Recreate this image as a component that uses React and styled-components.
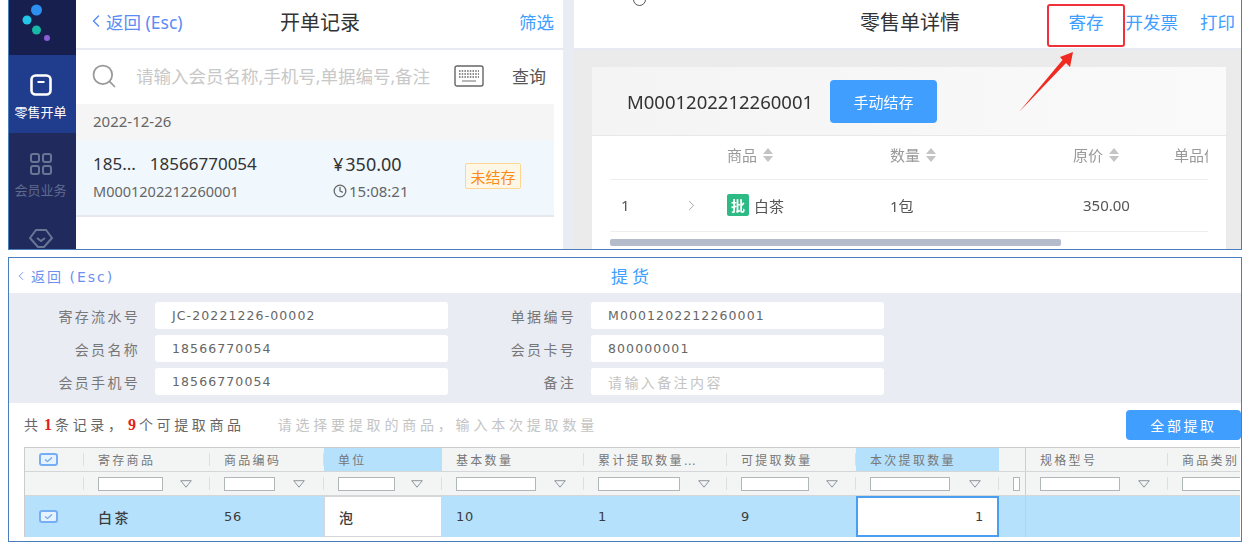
import React from 'react'
import styled, { createGlobalStyle } from 'styled-components'
import { ChevronLeft, ChevronRight, Clock, Search } from 'lucide-react'

const sans = '"Noto Sans", "Noto Sans CJK SC", sans-serif'
const wide = '"DejaVu Sans", "Noto Sans CJK SC", sans-serif'
const columns = '60px 126px 114px 118px 142px 143px 129px 143px 27px 142px 72px'

const GlobalStyle = createGlobalStyle`
  html, body {
    margin: 0;
    padding: 0;
    background: #fff;
  }
  body {
    font-family: ${sans};
  }
`

const Page = styled.div`
  width: 1250px;
  height: 545px;
  padding: 0 8px;
  box-sizing: border-box;
  display: flex;
  flex-direction: column;
  gap: 7px;
  overflow: hidden;
  filter: blur(0.35px);
`

const TopShot = styled.section`
  height: 250px;
  flex: none;
  display: flex;
  box-sizing: border-box;
  border: 1px solid #4a7ebb;
  border-top: none;
  overflow: hidden;
`

const Sidebar = styled.nav`
  width: 67px;
  flex: none;
  background: #202a5c;
  display: flex;
  flex-direction: column;
`

const LogoBox = styled.div`
  height: 55px;
  flex: none;
  background: #171f4e;
`

const NavItem = styled.div`
  height: ${p => (p.$active ? '78px' : '76px')};
  flex: none;
  display: flex;
  flex-direction: column;
  align-items: center;
  padding: ${p => (p.$active ? '19px' : '20px')} 4px 0 0;
  box-sizing: border-box;
  gap: ${p => (p.$active ? '8px' : '7px')};
  background: ${p => (p.$active ? '#1f3d8c' : 'transparent')};
  color: ${p => (p.$active ? '#fff' : '#5f6a8e')};
  font-size: 13px;
  line-height: 16px;
  white-space: nowrap;
`

const ListPanel = styled.div`
  width: 487px;
  flex: none;
  box-sizing: border-box;
  padding-right: 9px;
  background: #fff;
`

const ListHeader = styled.header`
  height: 50px;
  display: grid;
  grid-template-columns: 188px auto 1fr;
  align-items: center;
  box-sizing: border-box;
  margin-right: -9px;
  padding: 0 9px 6px 16px;
  border-bottom: 2px solid #e8eaf2;
`

const BackLink = styled.a`
  display: flex;
  align-items: center;
  margin-left: -6px;
  font-size: 17.5px;
  color: #5b8cf5;
  white-space: nowrap;
`

const PageTitle = styled.h1`
  margin: 0;
  font-size: 20px;
  font-weight: 400;
  color: #333;
  white-space: nowrap;
`

const ActionLink = styled.a`
  font-size: 17.5px;
  color: #409eff;
  white-space: nowrap;
  justify-self: end;
`

const SearchRow = styled.div`
  height: 54px;
  display: flex;
  align-items: center;
  box-sizing: border-box;
  padding: 0 0 3px 14px;
  color: #999;
`

const SearchHint = styled.span`
  margin-left: 18px;
  width: 318px;
  font-size: 17.5px;
  color: #c8c8c8;
  white-space: nowrap;
`

const QueryLabel = styled.span`
  margin-left: 28px;
  font-size: 17px;
  color: #555;
`

const DateBar = styled.div`
  height: 36px;
  display: flex;
  align-items: center;
  box-sizing: border-box;
  padding: 0 0 3px 17px;
  background: #f5f5f5;
  color: #666;
  font-size: 15px;
`

const OrderRow = styled.div`
  height: 77px;
  display: grid;
  grid-template-columns: 240px 132px 56px;
  align-items: center;
  box-sizing: border-box;
  padding: 0 0 3px 17px;
  background: #f0f8fe;
  border-bottom: 2px solid #e6e8ee;
`

const OrderCell = styled.div`
  display: flex;
  flex-direction: column;
  gap: 4px;
`

const OrderMain = styled.div`
  display: flex;
  gap: ${p => p.$gap || 0}px;
  font-size: ${p => p.$size || 17}px;
  line-height: 26px;
  color: #333;
  white-space: nowrap;
`

const OrderSub = styled.div`
  display: flex;
  align-items: center;
  gap: 2px;
  font-size: ${p => p.$size || 14.5}px;
  line-height: 20px;
  color: #666;
  white-space: nowrap;
`

const StatusTag = styled.span`
  height: 26px;
  display: flex;
  align-items: center;
  justify-content: center;
  box-sizing: border-box;
  background: #fff7e6;
  border: 1px solid #ffd591;
  border-radius: 2px;
  color: #fa8c16;
  font-size: 15px;
  white-space: nowrap;
`

const Divider = styled.div`
  width: 11px;
  flex: none;
  background: #e9ecf3;
`

const DetailPanel = styled.div`
  flex: 1;
  min-width: 0;
  position: relative;
  display: flex;
  flex-direction: column;
  background: #ebebeb;
`

const DetailHeader = styled.header`
  height: 50px;
  flex: none;
  display: flex;
  align-items: center;
  box-sizing: border-box;
  padding: 0 6px 6px 286px;
  background: #fff;
  border-bottom: 2px solid #e8eaf2;
`

const DetailActions = styled.div`
  margin-left: auto;
  display: flex;
  gap: 22px;
`

const DetailBody = styled.div`
  flex: 1;
  min-height: 0;
  padding: 17px 15px 0 18px;
`

const Card = styled.div`
  height: 100%;
  background: #fff;
`

const CardHead = styled.div`
  height: 68px;
  display: flex;
  align-items: center;
  gap: 17px;
  padding-left: 35px;
  background: linear-gradient(90deg, #f4f4f4, #fafafa);
  border-bottom: 1px solid #e8e8e8;
  font-size: 18.5px;
  color: #333;
`

const SettleButton = styled.button`
  width: 107px;
  height: 43px;
  border: none;
  border-radius: 4px;
  background: #409eff;
  color: #fff;
  font-family: ${sans};
  font-size: 15px;
`

const GoodsTable = styled.div`
  width: 598px;
  margin-left: 18px;
  overflow: hidden;
`

const GoodsRow = styled.div`
  display: grid;
  grid-template-columns: 117px 163px 183px 101px 34px;
  height: ${p => (p.$head ? '44px' : '52px')};
  align-items: center;
  box-sizing: border-box;
  padding-bottom: ${p => (p.$head ? '6px' : '1px')};
  border-bottom: 1px solid #eceef2;
  font-size: 15px;
  color: ${p => (p.$head ? '#999' : '#555')};
  white-space: nowrap;
`

const SortLabel = styled.span`
  display: flex;
  align-items: center;
  gap: 6px;
  overflow: hidden;
`

const IndexCell = styled.span`
  display: flex;
  align-items: center;
  padding-left: 11px;
  gap: 53px;
`

const GoodsName = styled.span`
  display: flex;
  align-items: center;
  gap: 5px;
`

const BatchBadge = styled.span`
  width: 22px;
  height: 22px;
  display: flex;
  align-items: center;
  justify-content: center;
  background: #2dba85;
  border-radius: 2px;
  color: #fff;
  font-weight: 700;
  font-size: 14px;
`

const Price = styled.span`
  padding-left: 10px;
`

const ScrollBar = styled.div`
  width: 451px;
  height: 7px;
  margin: 7px 0 0 18px;
  border-radius: 2px;
  background: #b4bccb;
`

const Callout = styled.div`
  position: absolute;
  left: 473px;
  top: 4px;
  width: 78px;
  height: 43px;
  box-sizing: border-box;
  border: 2px solid #f0303a;
  border-radius: 3px;
`

const CalloutArrow = styled.svg`
  position: absolute;
  left: 440px;
  top: 46px;
`

const CursorRing = styled.div`
  position: absolute;
  left: 59px;
  top: -7px;
  width: 11px;
  height: 11px;
  border: 1px solid #555;
  border-radius: 50%;
`

const PickupShot = styled.section`
  height: 285px;
  flex: none;
  box-sizing: border-box;
  border: 1px solid #4a7ebb;
  background: #fff;
  font-family: ${wide};
  overflow: hidden;
`

const PickupHeader = styled.header`
  height: 35px;
  display: grid;
  grid-template-columns: 597px auto;
  align-items: center;
  padding-left: 5px;
`

const PickupBack = styled.a`
  display: flex;
  align-items: center;
  gap: 3px;
  font-size: 14px;
  letter-spacing: 2px;
  color: #6b90ef;
  white-space: nowrap;
`

const PickupTitle = styled.h2`
  margin: 0;
  font-size: 17px;
  font-weight: 400;
  letter-spacing: 4px;
  color: #409eff;
`

const FormArea = styled.div`
  display: grid;
  grid-template-columns: 131px 293px 113px 293px;
  grid-auto-rows: 27px;
  column-gap: 15px;
  row-gap: 6px;
  padding: 9px 0 8px;
  background: #e9ecf3;
`

const FieldLabel = styled.label`
  align-self: center;
  text-align: right;
  font-size: 14px;
  letter-spacing: 2.3px;
  color: #777;
  white-space: nowrap;
`

const FieldValue = styled.div`
  display: flex;
  align-items: center;
  padding-left: 17px;
  background: #fff;
  border-radius: 3px;
  font-size: ${p => (p.$hint ? '14px' : '12.5px')};
  letter-spacing: ${p => (p.$hint ? '2.4px' : '1.1px')};
  color: ${p => (p.$hint ? '#c4c4c4' : '#666')};
  white-space: nowrap;
`

const Toolbar = styled.div`
  height: 44px;
  display: flex;
  justify-content: space-between;
  align-items: flex-start;
  padding-left: 15px;
`

const ToolbarInfo = styled.div`
  display: flex;
  gap: 33px;
  line-height: 44px;
  font-size: 14px;
  letter-spacing: 3.6px;
  color: #666;
  white-space: nowrap;
`

const Count = styled.b`
  padding: 0 2.5px;
  color: #e02020;
  font-family: "Liberation Serif", serif;
  font-size: 16px;
  letter-spacing: 0.5px;
`

const ToolbarHint = styled.span`
  letter-spacing: 3.8px;
  color: #c4c4c4;
`

const PickAllButton = styled.button`
  width: 115px;
  height: 30px;
  margin-top: 7px;
  border: none;
  border-radius: 4px;
  background: #409eff;
  color: #fff;
  font-family: ${wide};
  font-size: 14px;
  letter-spacing: 2.6px;
`

const GridTable = styled.div`
  width: 1216px;
  margin-left: 15px;
  box-sizing: border-box;
  border-top: 1px solid #ccc;
  border-left: 1px solid #ccc;
  overflow: hidden;
`

const GridRow = styled.div`
  display: grid;
  grid-template-columns: ${columns};
  height: ${p => p.$height}px;
  margin-left: -1px;
  box-sizing: border-box;
  background: ${p => p.$bg};
  border-bottom: ${p => (p.$line ? '1px solid #d4d6d8' : 'none')};
`

const HeadCell = styled.div`
  position: relative;
  display: flex;
  align-items: center;
  padding-left: ${p => (p.$check ? '15px' : '14px')};
  min-width: 0;
  overflow: hidden;
  background: ${p => (p.$focus ? '#b5e1fd' : 'transparent')};
  border-right: ${p => (p.$frozen ? '1px solid #ccc' : 'none')};
  font-size: 12px;
  letter-spacing: 2.3px;
  color: #777;
  white-space: nowrap;
  &::after {
    content: '';
    display: ${p => (p.$sep ? 'block' : 'none')};
    position: absolute;
    right: 0;
    top: 5px;
    bottom: 5px;
    width: 1px;
    background: #dcdedf;
  }
`

const FilterInput = styled.span`
  width: ${p => p.$width}px;
  height: 14px;
  flex: none;
  box-sizing: border-box;
  background: #fff;
  border: 1px solid #b0b7b8;
`

const FunnelIcon = styled.svg`
  flex: none;
  margin-left: ${p => p.$gap}px;
`

const DataCell = styled.div`
  display: flex;
  align-items: center;
  justify-content: ${p => (p.$right ? 'flex-end' : 'flex-start')};
  padding: 0 ${p => (p.$right ? '13px' : '0')} 0 ${p => (p.$check ? '15px' : '14px')};
  box-sizing: border-box;
  background: ${p => (p.$white ? '#fff' : 'transparent')};
  border: ${p => p.$border || 'none'};
  border-right: ${p => (p.$frozen ? '1px solid #ccc' : p.$border || 'none')};
  font-size: ${p => (p.$han ? '14px' : '13px')};
  font-weight: 500;
  letter-spacing: ${p => (p.$han ? '2.5px' : '0.8px')};
  color: #3c3c3c;
`

const CheckBox = styled.span`
  width: 19px;
  height: 13px;
  box-sizing: border-box;
  display: flex;
  align-items: center;
  justify-content: center;
  background: #e6f3ff;
  border: 2px solid #76aef5;
  border-radius: 3px;
`

const Logo = () => (
  <svg width="67" height="55" viewBox="0 0 67 55">
    <circle cx="27.5" cy="10" r="5.5" fill="#2d8ff0" />
    <circle cx="18" cy="20" r="4.5" fill="#22c6e8" />
    <circle cx="27.5" cy="30" r="4.5" fill="#16b8a8" />
    <circle cx="38" cy="38" r="3" fill="#8a5fd6" />
  </svg>
)

const RetailIcon = () => (
  <svg width="22" height="22" viewBox="0 0 22 22" fill="none" stroke="#fff">
    <rect x="1.5" y="1.5" width="19" height="19" rx="4" strokeWidth="2.6" />
    <path d="M7.5 8h7" strokeWidth="2" />
  </svg>
)

const MemberIcon = () => (
  <svg width="22" height="22" viewBox="0 0 22 22" fill="none" stroke="#6a7596" strokeWidth="2">
    <rect x="1" y="1" width="8" height="8" rx="2" />
    <rect x="13" y="1" width="8" height="8" rx="2" />
    <rect x="1" y="13" width="8" height="8" rx="2" />
    <rect x="13" y="13" width="8" height="8" rx="2" />
  </svg>
)

const TagIcon = () => (
  <svg width="24" height="20" viewBox="0 0 24 20" fill="none" stroke="#6a7596" strokeWidth="2">
    <path d="M7 1h10l6 8-8 9H9L1 9z" />
    <path d="M8 9l4 3 4-3" />
  </svg>
)

const KeyboardIcon = () => (
  <svg width="30" height="22" viewBox="0 0 30 22" fill="none">
    <rect x="1" y="1" width="28" height="20" rx="2" stroke="#666" strokeWidth="1.4" />
    <path d="M5 6h20M5 9h20M5 12h20" stroke="#666" strokeWidth="1.6" strokeDasharray="1.5 1.2" />
    <path d="M8 16h14" stroke="#888" strokeWidth="1.2" />
  </svg>
)

const SortIcon = () => (
  <svg width="10" height="14" viewBox="0 0 10 14" fill="#c4c4c4">
    <path d="M5 0l5 6H0zM5 14L0 8h10z" />
  </svg>
)

const Funnel = ({ gap }) => (
  <FunnelIcon $gap={gap} width="12" height="8" viewBox="0 0 12 8" fill="none" stroke="#8d9498">
    <path d="M.7.7h10.6L6 7.2z" />
  </FunnelIcon>
)

const Tick = () => (
  <CheckBox>
    <svg width="11" height="7" viewBox="0 0 11 7" fill="none" stroke="#6aa6f0" strokeWidth="1.2">
      <path d="M2 3.5l2.5 2 4.5-4" />
    </svg>
  </CheckBox>
)

const fields = [
  ['寄存流水号', 'JC-20221226-00002', '单据编号', 'M0001202212260001'],
  ['会员名称', '18566770054', '会员卡号', '800000001'],
  ['会员手机号', '18566770054', '备注', '请输入备注内容', true],
]

const gridColumns = [
  { title: '', check: true, sep: true },
  { title: '寄存商品', input: 65, gap: 17, sep: true, value: '白茶', han: true },
  { title: '商品编码', input: 51, gap: 18, sep: true, value: '56' },
  { title: '单位', input: 57, gap: 16, focus: true, value: '泡', white: true, han: true },
  { title: '基本数量', input: 80, gap: 18, sep: true, value: '10' },
  { title: '累计提取数量…', input: 82, gap: 18, sep: true, value: '1' },
  { title: '可提取数量', input: 68, gap: 17, sep: true, value: '9' },
  { title: '本次提取数量', input: 80, gap: 19, focus: true, value: '1', editing: true },
  { title: '', mini: true, frozen: true },
  { title: '规格型号', input: 80, gap: 18, sep: true },
  { title: '商品类别', input: 70, gap: 0 },
]

const RetailDetail = () => (
  <DetailPanel>
    <DetailHeader>
      <PageTitle>零售单详情</PageTitle>
      <DetailActions>
        <ActionLink>寄存</ActionLink>
        <ActionLink>开发票</ActionLink>
        <ActionLink>打印</ActionLink>
      </DetailActions>
    </DetailHeader>
    <DetailBody>
      <Card>
        <CardHead>
          M0001202212260001
          <SettleButton>手动结存</SettleButton>
        </CardHead>
        <GoodsTable>
          <GoodsRow $head>
            <span />
            <SortLabel>商品<SortIcon /></SortLabel>
            <SortLabel>数量<SortIcon /></SortLabel>
            <SortLabel>原价<SortIcon /></SortLabel>
            <SortLabel>单品优惠</SortLabel>
          </GoodsRow>
          <GoodsRow>
            <IndexCell>1<ChevronRight size={17} strokeWidth={1.2} color="#999" /></IndexCell>
            <GoodsName><BatchBadge>批</BatchBadge>白茶</GoodsName>
            <span>1包</span>
            <Price>350.00</Price>
          </GoodsRow>
        </GoodsTable>
        <ScrollBar />
      </Card>
    </DetailBody>
    <CursorRing />
    <Callout />
    <CalloutArrow width="60" height="70" viewBox="0 0 60 70">
      <path d="M59 6 L56 21 L52 17 L5 66 L48.5 14 L46 11 Z" fill="#f02a20" />
    </CalloutArrow>
  </DetailPanel>
)

const Pickup = () => (
  <PickupShot>
    <PickupHeader>
      <PickupBack><ChevronLeft size={14} strokeWidth={1.6} />返回 (Esc)</PickupBack>
      <PickupTitle>提货</PickupTitle>
    </PickupHeader>
    <FormArea>
      {fields.map(([label, value, label2, value2, hint]) => (
        <React.Fragment key={label}>
          <FieldLabel>{label}</FieldLabel>
          <FieldValue>{value}</FieldValue>
          <FieldLabel>{label2}</FieldLabel>
          <FieldValue $hint={hint}>{value2}</FieldValue>
        </React.Fragment>
      ))}
    </FormArea>
    <Toolbar>
      <ToolbarInfo>
        <span>共<Count>1</Count>条记录，<Count>9</Count>个可提取商品</span>
        <ToolbarHint>请选择要提取的商品，输入本次提取数量</ToolbarHint>
      </ToolbarInfo>
      <PickAllButton>全部提取</PickAllButton>
    </Toolbar>
    <GridTable>
      <GridRow $height={24} $bg="#f3f5f5" $line>
        {gridColumns.map((col, i) => (
          <HeadCell key={i} $check={col.check} $sep={col.sep} $focus={col.focus} $frozen={col.frozen}>
            {col.check ? <Tick /> : col.title}
          </HeadCell>
        ))}
      </GridRow>
      <GridRow $height={24} $bg="#f3f5f5" $line>
        {gridColumns.map((col, i) => (
          <HeadCell key={i} $sep={col.sep || col.focus} $frozen={col.frozen}>
            {col.input && <FilterInput $width={col.input} />}
            {col.input && col.gap > 0 && <Funnel gap={col.gap} />}
            {col.mini && <FilterInput $width={7} />}
          </HeadCell>
        ))}
      </GridRow>
      <GridRow $height={41} $bg="#b5e1fd">
        {gridColumns.map((col, i) => (
          <DataCell
            key={i}
            $check={col.check}
            $han={col.han}
            $frozen={col.frozen}
            $white={col.white || col.editing}
            $right={col.editing}
            $border={col.editing ? '2px solid #4a9ef0' : col.white ? '1px solid #d4d6d8' : undefined}
          >
            {col.check ? <Tick /> : col.value}
          </DataCell>
        ))}
      </GridRow>
    </GridTable>
  </PickupShot>
)

const App = () => (
  <Page>
    <GlobalStyle />
    <TopShot>
      <Sidebar>
        <LogoBox><Logo /></LogoBox>
        <NavItem $active><RetailIcon />零售开单</NavItem>
        <NavItem><MemberIcon />会员业务</NavItem>
        <NavItem><TagIcon /></NavItem>
      </Sidebar>
      <ListPanel>
        <ListHeader>
          <BackLink><ChevronLeft size={20} strokeWidth={1.8} />返回 (Esc)</BackLink>
          <PageTitle>开单记录</PageTitle>
          <ActionLink>筛选</ActionLink>
        </ListHeader>
        <SearchRow>
          <Search size={28} strokeWidth={1.5} />
          <SearchHint>请输入会员名称,手机号,单据编号,备注</SearchHint>
          <KeyboardIcon />
          <QueryLabel>查询</QueryLabel>
        </SearchRow>
        <DateBar>2022-12-26</DateBar>
        <OrderRow>
          <OrderCell>
            <OrderMain $gap={14}><span>185...</span><span>18566770054</span></OrderMain>
            <OrderSub>M0001202212260001</OrderSub>
          </OrderCell>
          <OrderCell>
            <OrderMain $size={18} $gap={2}><span>¥</span><span>350.00</span></OrderMain>
            <OrderSub $size={15}><Clock size={14} strokeWidth={2.2} />15:08:21</OrderSub>
          </OrderCell>
          <StatusTag>未结存</StatusTag>
        </OrderRow>
      </ListPanel>
      <Divider />
      <RetailDetail />
    </TopShot>
    <Pickup />
  </Page>
)

export default App
